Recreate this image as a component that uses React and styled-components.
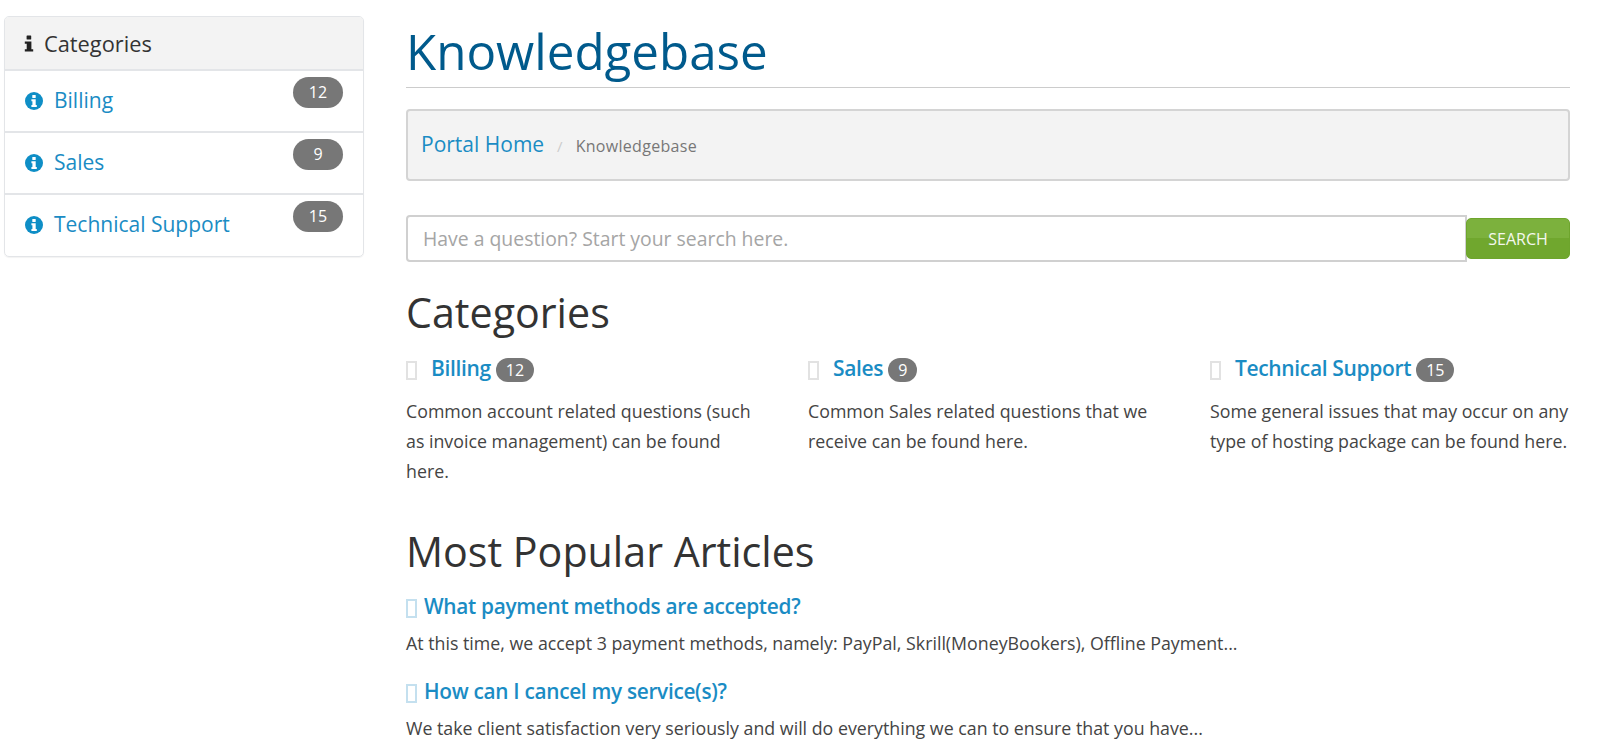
import styled, { createGlobalStyle } from "styled-components"

const GlobalStyle = createGlobalStyle`
  html, body {
    margin: 0;
    padding: 0;
    background: #fff;
    overflow: hidden;
  }
  body {
    font-family: "Open Sans", "Liberation Sans", sans-serif;
    font-size: 16px;
    color: #333;
  }
`

const Page = styled.div`
  display: grid;
  grid-template-columns: 360px 1164px;
  column-gap: 42px;
  padding: 16px 30px 0 4px;
  width: 1600px;
  height: 755px;
  box-sizing: border-box;
  overflow: hidden;
`

const Sidebar = styled.aside`
  align-self: start;
  border: 1px solid #e3e5e8;
  border-radius: 5px;
  box-shadow: 0 1px 1px rgb(0 0 0 / .05);
  overflow: hidden;
`

const SideHead = styled.div`
  display: flex;
  align-items: center;
  gap: 10px;
  height: 52px;
  padding-left: 19px;
  background: #f3f3f3;
  border-bottom: 2px solid #e3e5e8;
  font-size: 21.8px;
  color: #333;
`

const SideRow = styled.a`
  display: flex;
  align-items: flex-start;
  height: 62px;
  padding: 6px 20px 0 20px;
  box-sizing: border-box;
  border-bottom: 2px solid #e3e5e8;
  color: #1a8cc4;
  font-size: 21px;

  &:last-child {
    height: 61px;
    border-bottom: none;
  }
`

const SideLabel = styled.span`
  flex: 1;
  margin: 9px 0 0 11px;
  line-height: 29px;
`

const SideIcon = styled.svg`
  width: 18px;
  height: 18px;
  margin-top: 15px;
  flex: none;
`

const Pill = styled.span`
  width: 50px;
  height: 31px;
  line-height: 30px;
  border-radius: 16px;
  background: #777;
  color: #fff;
  text-align: center;
  font-size: 16px;
  font-weight: 500;
`

const Main = styled.main`
  min-width: 0;
`

const Title = styled.h1`
  margin: 0;
  height: 71px;
  line-height: 70px;
  font-size: 49.3px;
  font-weight: 400;
  color: #005a8c;
  border-bottom: 1px solid #ccc;
`

const Crumbs = styled.nav`
  display: flex;
  align-items: center;
  height: 72px;
  margin-top: 21px;
  padding-left: 13px;
  box-sizing: border-box;
  background: #f3f3f3;
  border: 2px solid #d4d4d4;
  border-radius: 4px;
`

const CrumbLink = styled.a`
  font-size: 21px;
  margin-top: -2px;
  color: #1a8cc4;
`

const CrumbSep = styled.span`
  margin: 1px 13px 0;
  font-size: 15px;
  color: #ccc;
`

const CrumbHere = styled.span`
  margin-top: 2px;
  font-size: 16px;
  letter-spacing: .3px;
  color: #777;
`

const SearchRow = styled.form`
  display: flex;
  align-items: center;
  margin-top: 34px;
`

const SearchBox = styled.input`
  flex: 1;
  height: 47px;
  padding: 0 15px;
  box-sizing: border-box;
  border: 2px solid #d0d0d0;
  border-radius: 4px 0 0 4px;
  font: 400 19.4px "Open Sans", sans-serif;
  color: #333;
  outline: none;

  &::placeholder {
    color: #a5a5a5;
    opacity: 1;
  }
`

const SearchButton = styled.button`
  width: 104px;
  height: 41px;
  margin-left: -1px;
  border: 1px solid #6ea52d;
  border-radius: 5px;
  background: linear-gradient(#7cb13d 0 50%, #70a72e 50% 100%);
  color: #f4f8ee;
  font: 500 16px "Open Sans", sans-serif;
`

const Heading = styled.h2`
  margin: ${(p) => p.$top}px 0 0;
  font-size: 41.2px;
  line-height: 52px;
  font-weight: 400;
  color: #333;
`

const CatGrid = styled.div`
  display: grid;
  grid-template-columns: repeat(3, 372px);
  column-gap: 30px;
  margin-top: 14px;
`

const CatTitle = styled.div`
  display: flex;
  align-items: center;
  height: 32px;
`

const Tofu = styled.span`
  width: 7px;
  height: 15px;
  flex: none;
  margin-top: 5px;
  border: 2px solid ${(p) => p.$color};
  box-sizing: content-box;
`

const CatLink = styled.a`
  margin-left: 14px;
  font-size: 21px;
  font-weight: 600;
  letter-spacing: -.35px;
  color: #1a8cc4;
`

const CountBadge = styled.span`
  margin: 3px 0 0 5px;
  padding: 0 10px;
  height: 24px;
  line-height: 24px;
  border-radius: 12px;
  background: #777;
  color: #fff;
  text-align: center;
  font-size: 16px;
  font-weight: 500;
`

const Blurb = styled.p`
  margin: 12px 0 0;
  padding-right: 10px;
  font-size: 17.8px;
  line-height: 30px;
  color: #444;
`

const Article = styled.div`
  margin-top: ${(p) => p.$top}px;
`

const ArticleTitle = styled.div`
  display: flex;
  align-items: center;
  gap: 7px;
  height: 32px;
`

const ArticleLink = styled.a`
  font-size: 20.8px;
  font-weight: 600;
  letter-spacing: -.3px;
  color: #1a8cc4;
`

const Excerpt = styled.p`
  margin: 6px 0 0;
  font-size: 17.8px;
  line-height: 30px;
  color: #444;
`

const InfoCircle = () => (
  <SideIcon viewBox="0 0 18 18">
    <circle cx="9" cy="9" r="9" fill="#0e8ec6" />
    <rect x="7.3" y="3" width="3.4" height="3" rx=".6" fill="#fff" />
    <path d="M6.4 7.3h4.3v5.6h1.1v2H6.4v-2h1v-3.6h-1z" fill="#fff" />
  </SideIcon>
)

const InfoGlyph = () => (
  <svg width="10" height="17" viewBox="0 0 10 17">
    <rect x="2.6" y="0.5" width="4.6" height="4" rx=".6" fill="#222" />
    <path d="M.8 6.4h6.6v7.8h1.8v2.4H.8v-2.4h1.9V8.8H.8z" fill="#222" />
  </svg>
)

const sideItems = [
  { name: "Billing", count: 12 },
  { name: "Sales", count: 9 },
  { name: "Technical Support", count: 15 },
]

const categories = [
  { name: "Billing", count: 12, text: "Common account related questions (such as invoice management) can be found here." },
  { name: "Sales", count: 9, text: "Common Sales related questions that we receive can be found here." },
  { name: "Technical Support", count: 15, text: "Some general issues that may occur on any type of hosting package can be found here." },
]

const articles = [
  { title: "What payment methods are accepted?", text: "At this time, we accept 3 payment methods, namely: PayPal, Skrill(MoneyBookers), Offline Payment...", top: 13 },
  { title: "How can I cancel my service(s)?", text: "We take client satisfaction very seriously and will do everything we can to ensure that you have...", top: 17 },
]

function App() {
  return (
    <>
      <GlobalStyle />
      <Page>
        <Sidebar>
          <SideHead>
            <InfoGlyph />
            Categories
          </SideHead>
          {sideItems.map((item) => (
            <SideRow key={item.name}>
              <InfoCircle />
              <SideLabel>{item.name}</SideLabel>
              <Pill>{item.count}</Pill>
            </SideRow>
          ))}
        </Sidebar>
        <Main>
          <Title>Knowledgebase</Title>
          <Crumbs>
            <CrumbLink>Portal Home</CrumbLink>
            <CrumbSep>/</CrumbSep>
            <CrumbHere>Knowledgebase</CrumbHere>
          </Crumbs>
          <SearchRow>
            <SearchBox placeholder="Have a question? Start your search here." />
            <SearchButton type="button">SEARCH</SearchButton>
          </SearchRow>
          <Heading $top={24}>Categories</Heading>
          <CatGrid>
            {categories.map((cat) => (
              <div key={cat.name}>
                <CatTitle>
                  <Tofu $color="#e2e2e2" />
                  <CatLink>{cat.name}</CatLink>
                  <CountBadge>{cat.count}</CountBadge>
                </CatTitle>
                <Blurb>{cat.text}</Blurb>
              </div>
            ))}
          </CatGrid>
          <Heading $top={39}>Most Popular Articles</Heading>
          {articles.map((a) => (
            <Article key={a.title} $top={a.top}>
              <ArticleTitle>
                <Tofu $color="#c4e0ef" />
                <ArticleLink>{a.title}</ArticleLink>
              </ArticleTitle>
              <Excerpt>{a.text}</Excerpt>
            </Article>
          ))}
        </Main>
      </Page>
    </>
  )
}

export default App
